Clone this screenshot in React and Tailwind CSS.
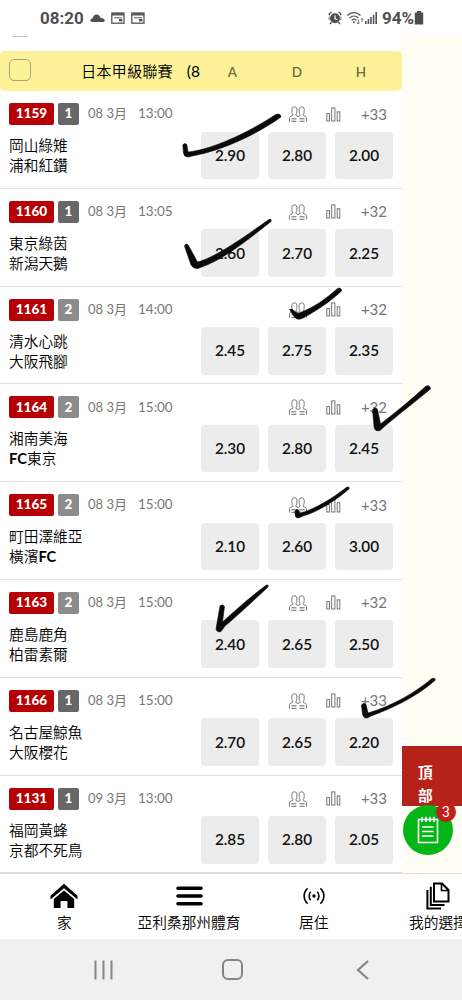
const matches = [
  { id: "1159", tag: "1", date: "08 3月", time: "13:00", home: "岡山綠雉", away: "浦和紅鑽", more: "+33", odds: ["2.90", "2.80", "2.00"] },
  { id: "1160", tag: "1", date: "08 3月", time: "13:05", home: "東京綠茵", away: "新潟天鵝", more: "+32", odds: ["2.60", "2.70", "2.25"] },
  { id: "1161", tag: "2", date: "08 3月", time: "14:00", home: "清水心跳", away: "大阪飛腳", more: "+32", odds: ["2.45", "2.75", "2.35"] },
  { id: "1164", tag: "2", date: "08 3月", time: "15:00", home: "湘南美海", away: "FC東京", more: "+32", odds: ["2.30", "2.80", "2.45"] },
  { id: "1165", tag: "2", date: "08 3月", time: "15:00", home: "町田澤維亞", away: "橫濱FC", more: "+33", odds: ["2.10", "2.60", "3.00"] },
  { id: "1163", tag: "2", date: "08 3月", time: "15:00", home: "鹿島鹿角", away: "柏雷素爾", more: "+32", odds: ["2.40", "2.65", "2.50"] },
  { id: "1166", tag: "1", date: "08 3月", time: "15:00", home: "名古屋鯨魚", away: "大阪櫻花", more: "+33", odds: ["2.70", "2.65", "2.20"] },
  { id: "1131", tag: "1", date: "09 3月", time: "13:00", home: "福岡黃蜂", away: "京都不死鳥", more: "+33", odds: ["2.85", "2.80", "2.05"] },
];

const CalendarIcon = () => (
  <svg width="14" height="12" viewBox="0 0 14 12" fill="none" stroke="#555">
    <rect x="0.8" y="1" width="12.2" height="10.2" strokeWidth="1.3" />
    <path d="M1 2.3H13" strokeWidth="2.4" />
    <path d="M3 5.8H11" strokeWidth="1" />
    <rect x="8" y="7" width="3.4" height="2.4" fill="#555" stroke="none" />
  </svg>
);

const StatusBar = () => (
  <header className="flex h-9 items-center justify-between bg-white pr-[38px] pl-10 text-[#505050]">
    <div className="flex items-center">
      <span className="font-['Roboto','Noto_Sans',sans-serif] text-[17px] leading-none font-bold">
        08:20
      </span>
      <svg className="ml-[6px]" width="15" height="10" viewBox="0 0 15 10" fill="#505050">
        <path d="M2.400 9C1.200 9 0.300 8.400 0.300 7.300C0.300 6.200 1.100 5.500 2.500 5.400C3.200 3 4.600 1.400 6.700 1.400C8.600 1.400 9.900 2.600 10.700 4.900C13.200 4.900 14.700 5.900 14.700 7.400C14.700 8.500 13.800 9 12.600 9Z" />
      </svg>
      <div className="ml-[6px] flex gap-[6px]">
        <CalendarIcon />
        <CalendarIcon />
      </div>
    </div>
    <div className="flex items-center">
      {/* Alarm */}
      <svg width="14" height="14" viewBox="0 0 14 14" fill="none" stroke="#4d4d4d">
        <circle cx="7" cy="7.3" r="5" fill="#4d4d4d" stroke="none" />
        <path d="M7 4.2V7.6L9.2 8.8" stroke="#fff" strokeWidth="1.2" />
        <path d="M0.8 4.2C1.2 2.8 2 1.9 3.4 1.2M13.2 4.2C12.8 2.8 12 1.9 10.6 1.2M3.5 11.2L2 13M10.5 11.2L12 13" strokeWidth="1.4" />
        <path d="M1.2 5.6A6 6 0 0 0 1.4 9.2M12.8 5.6A6 6 0 0 1 12.6 9.2" strokeWidth="0.8" />
      </svg>
      {/* Wifi */}
      <svg className="ml-[4px]" width="18" height="14" viewBox="0 0 17 14" fill="none" stroke="#555" strokeWidth="1.2">
        <path d="M0.8 4.5C4.4 0.7 10.4 0.7 14 4.5M3 7C5.6 4.3 9.4 4.3 11.8 7M5.2 9.3C6.8 7.8 8.4 7.8 9.8 9.3" />
        <circle cx="7.4" cy="11.3" r="1" fill="#555" stroke="none" />
        <path d="M11.8 8.5V13M10.3 11.5L11.8 13L13.3 11.5M15.6 11V7.5M14.4 8.7L15.6 7.5L16.8 8.7" strokeWidth="0.8" />
      </svg>
      {/* Signal */}
      <svg className="ml-px" width="13" height="12" viewBox="0 0 13 12" fill="#555">
        <rect x="0" y="9" width="1.6" height="3" />
        <rect x="2.6" y="7" width="1.6" height="5" />
        <rect x="5.2" y="5" width="1.6" height="7" />
        <rect x="7.8" y="2.8" width="1.6" height="9.2" />
        <rect x="10.4" y="0" width="1.6" height="12" />
      </svg>
      <span className="ml-[4px] font-['Roboto','Noto_Sans',sans-serif] text-[17px] leading-none font-bold">
        94%
      </span>
      <svg width="10" height="14" viewBox="0 0 10 14" fill="#4d4d4d">
        <path d="M3 0H7V1.5H9.2V13.5H0.8V1.5H3Z" />
      </svg>
    </div>
  </header>
);

const PeopleIcon = () => (
  <svg width="18" height="16" viewBox="0 0 18 16" fill="none" stroke="#666" strokeWidth="0.9">
    <path d="M0.5 15.5V12.2C0.5 10.8 1.3 10.2 3.7 9.5V8.2C2.9 7.6 2.9 6.6 2.9 5.5C2.4 2.4 3.4 0.8 5.4 0.8C7.5 0.8 8.3 2.4 7.8 5.5C7.8 6.6 7.8 7.6 7 8.2V9.5L9 10.5L11 9.5V8.2C10.2 7.6 10.2 6.6 10.2 5.5C9.7 2.4 10.5 0.8 12.6 0.8C14.6 0.8 15.6 2.4 15.1 5.5C15.1 6.6 15.1 7.6 14.3 8.2V9.5C16.7 10.2 17.5 10.8 17.5 12.2V15.5" />
    <path d="M2.4 12.8H7.5M10.5 12.8H15.6M2.4 15.3H7.5M10.5 15.3H15.6" strokeWidth="1" />
  </svg>
);

const StatsIcon = () => (
  <svg width="15" height="15" viewBox="0 0 15 15" fill="none" stroke="#666" strokeWidth="0.9">
    <rect x="0.8" y="6.6" width="2.6" height="7.4" />
    <rect x="5.7" y="0.9" width="3.2" height="13.1" />
    <rect x="11.2" y="4.8" width="2.6" height="9.2" />
  </svg>
);

// Latin part of a team name is heavier than the Chinese part
const TeamName = ({ name }) => (
  <p className="h-5">
    {name.split(/(FC)/).map((part, i) =>
      part === "FC" ? <b key={i}>FC</b> : part
    )}
  </p>
);

const MatchRow = ({ match }) => (
  <div className="flex h-[97.8px] justify-between border-b border-[#e0e0e0] pr-[9px] pl-[9px]">
    <div className="pt-[12px]">
      <div className="flex h-[22px] items-center text-[13.5px] leading-none text-[#777]">
        <span className="flex h-full w-[45px] items-center justify-center rounded-[2px] bg-[#b70006] text-[13.6px] font-black text-white">
          {match.id}
        </span>
        <span
          className={`ml-1 flex h-full w-[21px] items-center justify-center rounded-[2px] font-black text-white ${
            match.tag === "1" ? "bg-[#676767]" : "bg-[#8c8c8c]"
          }`}
        >
          {match.tag}
        </span>
        <div className="ml-[9px] flex items-baseline text-[13px]">
          <span className="w-[50px] whitespace-nowrap">{match.date}</span>
          <span className="text-[13.5px]">{match.time}</span>
        </div>
      </div>
      <div className="mt-[10px] text-[14.7px] leading-5 font-[350] text-black">
        <TeamName name={match.home} />
        <TeamName name={match.away} />
      </div>
    </div>

    <div className="w-[192px] pt-[12px]">
      <div className="flex h-[22px] items-center justify-end pr-[6px]">
        <PeopleIcon />
        <span className="ml-[19px]">
          <StatsIcon />
        </span>
        <span className="ml-[13px] w-[33px] text-right text-[15px] leading-none text-[#777]">
          {match.more}
        </span>
      </div>
      <div className="mt-[6.5px] grid grid-cols-3 gap-[9px]">
        {match.odds.map((odd, i) => (
          <button
            key={i}
            className="h-[47.5px] rounded-[4px] bg-[#ececec] text-[15.3px] font-semibold text-[#111]"
          >
            {odd}
          </button>
        ))}
      </div>
    </div>
  </div>
);

const NavItem = ({ label, children }) => (
  <div className="flex w-[124.7px] shrink-0 flex-col items-center">
    <div className="flex h-[30px] items-center">{children}</div>
    <span className="mt-px text-[14.7px] leading-5 font-[350] whitespace-nowrap text-black">{label}</span>
  </div>
);

const BottomNav = () => (
  <nav className="flex h-[66px] overflow-hidden border-t border-[#dcdcdc] bg-white pt-[7px] pl-[2px]">
    <NavItem label="家">
      <svg width="28" height="26" viewBox="0 0 28 26" fill="#000">
        <path d="M0.5 12.7L14 0.8L27.5 12.7V16.4L14 5.2L0.5 16.4Z" />
        <path d="M3.8 16L14 7.6L24.2 16V25H17.4V18H10.6V25H3.8Z" />
      </svg>
    </NavItem>
    <NavItem label="亞利桑那州體育">
      <svg width="27" height="20" viewBox="0 0 27 20" stroke="#000" strokeWidth="3.6" strokeLinecap="round">
        <path d="M2 2.2H25M2 10H25M2 17.8H25" />
      </svg>
    </NavItem>
    <NavItem label="居住">
      <svg width="22" height="18" viewBox="0 0 22 18" fill="none" stroke="#000" strokeWidth="1.6">
        <circle cx="11" cy="9" r="1.7" fill="#000" stroke="none" />
        <path d="M7.7 4.8C5.6 7 5.6 11 7.7 13.2M14.3 4.8C16.4 7 16.4 11 14.3 13.2M4.6 1.4C0 5.5 0 12.5 4.6 16.6M17.4 1.4C22 5.5 22 12.5 17.4 16.6" />
      </svg>
    </NavItem>
    <NavItem label="我的選擇">
      <svg width="24" height="28" viewBox="0 0 24 28" fill="none" stroke="#000" strokeWidth="2">
        <path d="M8 1.5H16L22.5 8V19.5H8Z" />
        <path d="M15.5 1.5V8.5H22.5" strokeWidth="1.6" />
        <path d="M4.8 4.8V23H18.5M1.4 8V26.5H15" />
      </svg>
    </NavItem>
  </nav>
);

// Pen ticks drawn over the list
const PenMarks = () => (
  <svg
    className="pointer-events-none absolute top-0 left-0"
    width="462"
    height="1000"
    viewBox="0 0 462 1000"
    fill="#0a0a0a"
    stroke="#0a0a0a"
    strokeWidth="0.6"
    strokeLinejoin="round"
  >
    <path d="M182.800 145Q184.500 142.500 186.800 144.500L188 152C205 150.500 238 139 275 115Q280.500 112.500 281 117C256 135 222 150 197 155L188 157Q184 157 183.500 153Z" />
    <path d="M184.500 246Q186 242.500 188.500 245.500L197.500 262C214 258 240 240 269 219.500Q272 218.500 271 221.500C250 238 228 256 208 264.500L198 268.500Q193.500 269 191 265Z" />
    <path d="M289.500 309.500Q292 308.300 293.500 310.500L298 313.500C313 308 326 299 337.500 288.500Q341.500 287 341.500 291C331 301 315 312 302 318.500Q297 320.500 294.500 317Z" />
    <path d="M372.500 409.500Q374.500 406.500 377.500 409.500L380.500 424C396 412 411 400 425.500 386.500Q430 384 430.500 389C416 401 398 415 385 426L380 430.500Q374 432 374 426Z" />
    <path d="M295 511Q296.500 508 299 510.500L300 513.500C317 508 333 498 347 487Q350 486.500 349 489C334 502 317 512 303 516L298.500 518Q295 518 295 514Z" />
    <path d="M220 606Q222.500 603.500 224.500 606.500L222.500 622C237 609 251 596 266.500 585Q269 584.500 268 587C252 602 237 616 225 626L221 631.500Q217 633 216 629Z" />
    <path d="M361.500 705Q363.500 702 366 704.500L368 713C392 706 413 694 432 678.500Q436 677.500 435 680.500C415 698 390 709 371 716L367 718Q363.500 718.500 362.500 714Z" />
  </svg>
);

const App = () => {
  return (
    <div className="relative flex h-[1000px] w-[462px] flex-col overflow-hidden bg-white font-['Lato','Noto_Sans_CJK_TC',sans-serif]">
      <StatusBar />

      <main className="flex h-[837px] shrink-0">
        <section className="w-[402px] shrink-0">
          <div className="h-[15px] pl-3">
            <div className="h-px w-4 bg-[#c4c4c4]" />
          </div>
          <div className="flex h-10 items-center justify-between rounded-[5px] bg-[#fdf297] pr-[9px] pl-[9px]">
            <div className="flex items-center">
              <span className="mb-[2px] h-[22px] w-[22px] rounded-[5px] border border-[#a9a482]" />
              <span className="ml-[50px] text-[15.3px] leading-5 font-[350] whitespace-pre text-black">
                日本甲級聯賽
              </span>
              <span className="ml-[14px] text-[15.5px] leading-5 text-black">(8</span>
            </div>
            <div className="grid w-[192px] grid-cols-3 gap-[9px] pt-[2px] text-center text-[13.5px] font-semibold text-[#736d3d]">
              <span className="pl-[5px]">A</span>
              <span>D</span>
              <span className="pr-[6px]">H</span>
            </div>
          </div>
          {matches.map((match) => (
            <MatchRow key={match.id} match={match} />
          ))}
        </section>

        <aside className="flex grow flex-col justify-end bg-[#fffdf4] pb-[18px]">
          <div className="h-[60px] bg-[#b52218] pt-[15px] pl-[16px] text-[14.7px] leading-[23px] font-bold text-white">
            <p>頂</p>
            <p>部</p>
          </div>
          <div className="relative mt-[-1px] ml-px flex h-[50px] w-[50px] items-center justify-center rounded-full bg-[#03b615]">
            <svg width="22" height="28" viewBox="0 0 22 28" fill="none" stroke="#fff" strokeWidth="1.6">
              <path d="M1.500 3.500H20.500V26.500H1.500Z" />
              <path d="M5 0.800V6M9 0.800V6M13 0.800V6M17 0.800V6M5 11H16.500M5 15.500H16.500M5 20H16.500" />
            </svg>
            <span className="absolute top-[-3px] left-[33px] flex h-5 w-5 items-center justify-center rounded-full bg-[#c0201c] font-['Roboto','Noto_Sans',sans-serif] text-sm leading-none text-white">
              3
            </span>
          </div>
        </aside>
      </main>

      <BottomNav />

      {/* System navigation */}
      <footer className="flex grow items-center justify-between bg-[#f0f0f0] pr-[93px] pl-[94px]">
        <svg width="19" height="20" viewBox="0 0 19 20" stroke="#858585" strokeWidth="2">
          <path d="M1.500 0.500V19.500M9.500 0.500V19.500M17.500 0.500V19.500" />
        </svg>
        <span className="mr-[4px] h-[21px] w-[21px] rounded-[6px] border-2 border-[#858585]" />
        <svg width="13" height="20" viewBox="0 0 13 20" fill="none" stroke="#858585" strokeWidth="2.2">
          <path d="M12 1L2 10L12 19" />
        </svg>
      </footer>

      <PenMarks />
    </div>
  );
};

export default App;
